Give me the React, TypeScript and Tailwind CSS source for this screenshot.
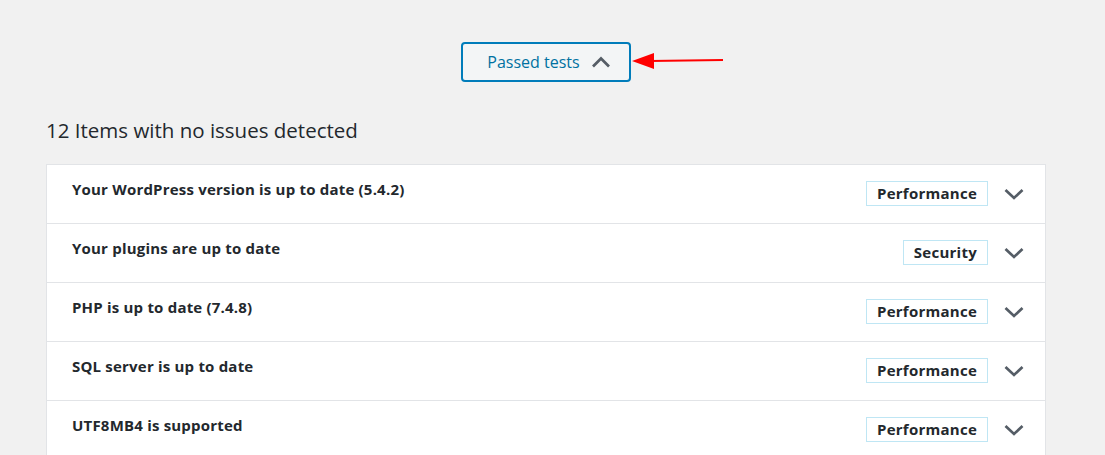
const items = [
  { title: 'Your WordPress version is up to date (5.4.2)', badge: 'Performance' },
  { title: 'Your plugins are up to date', badge: 'Security' },
  { title: 'PHP is up to date (7.4.8)', badge: 'Performance' },
  { title: 'SQL server is up to date', badge: 'Performance' },
  { title: 'UTF8MB4 is supported', badge: 'Performance' },
];

const Chevron = ({ up = false }: { up?: boolean }) => (
  <svg width="20" height="12" viewBox="0 0 20 12" className="shrink-0">
    <polyline
      points={up ? '2,10.5 10,2.5 18,10.5' : '1.5,2 10,10 18.5,2'}
      fill="none"
      stroke="#555d66"
      strokeWidth="2.7"
    />
  </svg>
);

const App = () => {
  return (
    <div
      className="min-h-[455px] bg-[#f1f1f1] pl-[46px] pr-[59px] pt-[42px] text-[#23282d]"
      style={{ fontFamily: '"Open Sans", "Noto Sans", sans-serif' }}
    >
      {/* Toggle button + annotation arrow */}
      <div className="flex justify-center">
        <div className="relative">
          <button className="flex h-[40px] w-[170px] items-center justify-center gap-[11px] rounded-[4px] border-2 border-[#007cba] bg-[#f3f5f6] pl-[6px] text-[16px] text-[#0071a1]">
            <span>Passed tests</span>
            <Chevron up />
          </button>
          <svg
            className="absolute left-full top-[9px] ml-[1px]"
            width="92"
            height="20"
            viewBox="0 0 92 20"
          >
            <line x1="18" y1="10" x2="91" y2="9" stroke="#f00" strokeWidth="2" />
            <polygon points="0,10 22,2 22,18" fill="#f00" />
          </svg>
        </div>
      </div>

      <h2 className="mt-[34px] text-[20.5px] leading-[28px] font-normal">
        12 Items with no issues detected
      </h2>

      <div className="mt-[20px] border border-b-0 border-[#e2e4e7] bg-white">
        {items.map((item) => (
          <div
            key={item.title}
            className="flex h-[59px] items-center border-b border-[#e2e4e7] pl-[25px] pr-[21px]"
          >
            <div className="mb-[9px] flex-1 text-[15px] leading-[21px] font-bold tracking-[0.2px]">
              {item.title}
            </div>
            <span className="mb-[2px] border border-[#bfe6f4] px-[10px] text-[15px] leading-[23px] font-bold tracking-[0.25px]">
              {item.badge}
            </span>
            <span className="ml-[16px]">
              <Chevron />
            </span>
          </div>
        ))}
      </div>
    </div>
  );
};

export default App;
